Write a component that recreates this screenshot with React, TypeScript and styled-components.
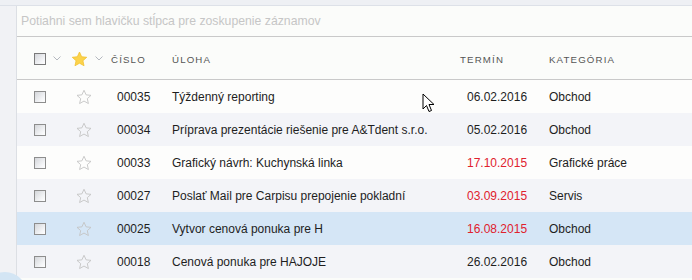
import React from 'react';
import styled, { createGlobalStyle } from 'styled-components';

interface Task {
  id: string;
  title: string;
  due: string;
  overdue?: boolean;
  category: string;
  selected?: boolean;
}

const tasks: Task[] = [
  { id: '00035', title: 'Týždenný reporting', due: '06.02.2016', category: 'Obchod' },
  { id: '00034', title: 'Príprava prezentácie riešenie pre A&Tdent s.r.o.', due: '05.02.2016', category: 'Obchod' },
  { id: '00033', title: 'Grafický návrh: Kuchynská linka', due: '17.10.2015', overdue: true, category: 'Grafické práce' },
  { id: '00027', title: 'Poslať Mail pre Carpisu prepojenie pokladní', due: '03.09.2015', overdue: true, category: 'Servis' },
  { id: '00025', title: 'Vytvor cenová ponuka pre H', due: '16.08.2015', overdue: true, category: 'Obchod', selected: true },
  { id: '00018', title: 'Cenová ponuka pre HAJOJE', due: '26.02.2016', category: 'Obchod' },
];

const GlobalStyle = createGlobalStyle`
  html, body {
    margin: 0;
    padding: 0;
    background: #fbfcfa;
  }
  body {
    font-family: 'Liberation Sans', Arial, sans-serif;
  }
`;

const Page = styled.div`
  position: relative;
  width: 692px;
  height: 280px;
  overflow: hidden;
  display: flex;
  flex-direction: column;
  background: #fbfcfa;
`;

const TopStrip = styled.div`
  height: 5px;
  background: #eef0f4;
  border-bottom: 1px solid #dde1e8;
  flex-shrink: 0;
`;

const Body = styled.div`
  display: flex;
  flex: 1;
`;

const Sidebar = styled.div`
  width: 16px;
  background: #f1f2f5;
  border-right: 1px solid #dcdfe4;
  flex-shrink: 0;
`;

const Grid = styled.div`
  flex: 1;
  display: flex;
  flex-direction: column;
`;

const GroupPanel = styled.div`
  height: 30px;
  padding-left: 4px;
  display: flex;
  align-items: center;
  border-bottom: 1px solid #c9c9c9;
  font-size: 12.25px;
  color: #c6c6c6;
`;

const columns = '38px 40px 61px 288px 89px 1fr';

const HeaderRow = styled.div`
  height: 43px;
  display: grid;
  grid-template-columns: ${columns};
  align-items: center;
  padding-left: 16px;
  border-bottom: 1px solid #c9c9c9;
  padding-top: 1px;
  box-sizing: border-box;
`;

const HeadLabel = styled.div`
  font-size: 9.7px;
  letter-spacing: 1.15px;
  color: #555;
  padding-top: 1px;
`;

const HeadTool = styled.div`
  display: flex;
  align-items: center;
  gap: 7px;
`;

const Row = styled.div<{ $bg: string }>`
  height: 33px;
  display: grid;
  grid-template-columns: ${columns};
  align-items: center;
  padding-left: 16px;
  background: ${p => p.$bg};
  font-size: 12px;
  color: #1e1e1e;
`;

const Cell = styled.div<{ $pad?: number; $red?: boolean }>`
  padding-left: ${p => p.$pad ?? 0}px;
  color: ${p => (p.$red ? '#e0212d' : 'inherit')};
  white-space: nowrap;
  display: flex;
  align-items: center;
`;

const Check = styled.span<{ $head?: boolean }>`
  display: inline-block;
  width: 10px;
  height: 10px;
  margin-left: 1px;
  border: 1px solid ${p => (p.$head ? '#7a7a7a' : '#8d8d8d')};
  background: linear-gradient(135deg, #d4d6da 0%, #f4f5f7 70%, #ffffff 100%);
`;

const Fab = styled.div`
  position: absolute;
  left: -17px;
  top: 272px;
  width: 44px;
  height: 44px;
  border-radius: 50%;
  background: #d3e5f4;
`;

const Cursor = styled.svg`
  position: absolute;
  left: 422px;
  top: 93px;
`;

function Chevron(): React.ReactElement {
  return (
    <svg width="8" height="5" viewBox="0 0 8 5">
      <path d="M0.5 0.5 L4 4 L7.5 0.5" fill="none" stroke="#b4b8bf" strokeWidth="1" />
    </svg>
  );
}

function Star({ filled }: { filled?: boolean }): React.ReactElement {
  const d = 'M8 1 L10.1 5.6 L15 6.1 L11.3 9.4 L12.4 14.3 L8 11.8 L3.6 14.3 L4.7 9.4 L1 6.1 L5.9 5.6 Z';
  return filled ? (
    <svg width="17" height="16" viewBox="0 0 16 15.5">
      <path d={d} fill="#fcd34b" stroke="#f2c232" strokeWidth="0.8" strokeLinejoin="round" />
    </svg>
  ) : (
    <svg width="16" height="16" viewBox="0 0 16 15.5">
      <path d={d} fill="none" stroke="#c4c4c4" strokeWidth="0.9" strokeLinejoin="round" />
    </svg>
  );
}

function rowBg(t: Task, i: number): string {
  if (t.selected) return '#d5e6f6';
  return i % 2 === 1 ? '#f3f4f8' : '#fdfdfc';
}

export default function App(): React.ReactElement {
  return (
    <Page>
      <GlobalStyle />
      <TopStrip />
      <Body>
        <Sidebar />
        <Grid>
          <GroupPanel>Potiahni sem hlavičku stĺpca pre zoskupenie záznamov</GroupPanel>
          <HeaderRow>
            <HeadTool>
              <Check $head />
              <Chevron />
            </HeadTool>
            <HeadTool>
              <Star filled />
              <Chevron />
            </HeadTool>
            <HeadLabel>ČÍSLO</HeadLabel>
            <HeadLabel>ÚLOHA</HeadLabel>
            <HeadLabel>TERMÍN</HeadLabel>
            <HeadLabel>KATEGÓRIA</HeadLabel>
          </HeaderRow>
          {tasks.map((t, i) => (
            <Row key={t.id} $bg={rowBg(t, i)}>
              <Cell>
                <Check />
              </Cell>
              <Cell $pad={5}>
                <Star />
              </Cell>
              <Cell $pad={6}>{t.id}</Cell>
              <Cell>{t.title}</Cell>
              <Cell $pad={7} $red={t.overdue}>
                {t.due}
              </Cell>
              <Cell $pad={-1}>{t.category}</Cell>
            </Row>
          ))}
        </Grid>
      </Body>
      <Fab />
      <Cursor width="14" height="20" viewBox="0 0 14 20">
        <path d="M1 1 L1 16 L4.5 12.5 L7 18.5 L9.5 17.5 L7 11.5 L12 11.5 Z" fill="#fff" stroke="#000" strokeWidth="1" strokeLinejoin="miter" />
      </Cursor>
    </Page>
  );
}
